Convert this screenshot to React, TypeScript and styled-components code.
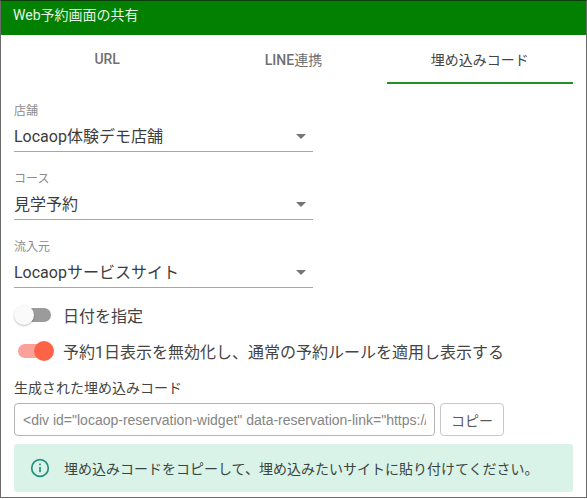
import React, { useState } from "react";
import styled, { createGlobalStyle } from "styled-components";

const GlobalStyle = createGlobalStyle`
  *, *::before, *::after { box-sizing: border-box; }
  body {
    margin: 0;
    background: #fff;
    color: #444;
    font-family: Roboto, "Noto Sans CJK JP", sans-serif;
    font-size: 14px;
  }
  button, input, select { font: inherit; color: inherit; }
`;

const Dialog = styled.main`
  border: 1px solid #6b6b6b;
  border-top-color: #0b3d0b;
  background: #fff;
`;

const Header = styled.header`
  padding: 4px 12px 10px;
  background: #028002;
  color: #e4f3e4;
`;

const Title = styled.h1`
  margin: 0;
  font-size: 14px;
  font-weight: 400;
  line-height: 20px;
`;

const Body = styled.div`
  padding: 0 13px 5px;
`;

const Tabs = styled.div`
  display: grid;
  grid-template-columns: repeat(3, 1fr);
  margin-bottom: 18px;
`;

const Tab = styled.button<{ $active: boolean }>`
  height: 49px;
  padding: 1px 0 0;
  border: 0;
  border-bottom: 2px solid ${(p) => (p.$active ? "#259025" : "transparent")};
  background: none;
  color: ${(p) => (p.$active ? "#444" : "#707070")};
  font-weight: 400;
  cursor: pointer;
`;

const Latin = styled.span`
  font-weight: 500;
`;

const Fields = styled.div`
  display: flex;
  flex-direction: column;
  gap: 18px;
  max-width: 299px;
`;

const FieldBox = styled.label`
  display: grid;
  border-bottom: 1px solid #a8a8a8;
`;

const FieldLabel = styled.span`
  color: #8c8c8c;
  font-size: 12px;
  line-height: 19px;
`;

const SelectWrap = styled.span`
  display: grid;
  align-items: center;
  & > * { grid-area: 1 / 1; }
  svg {
    justify-self: end;
    margin-right: 7px;
    pointer-events: none;
  }
`;

const Select = styled.select`
  width: 100%;
  height: 30px;
  padding: 0 24px 0 0;
  border: 0;
  appearance: none;
  background: transparent;
  color: #3c3c3c;
  font-size: 16px;
`;

const Switches = styled.div`
  display: flex;
  flex-direction: column;
  margin-top: 9px;
`;

const SwitchLabel = styled.label`
  display: flex;
  align-items: center;
  gap: 9px;
  height: 36px;
  font-size: 16px;
`;

const SwitchInput = styled.input`
  flex: none;
  appearance: none;
  width: 40px;
  height: 20px;
  margin: 0;
  position: relative;
  cursor: pointer;
  &::before {
    content: "";
    position: absolute;
    inset: 3px 3px 3px 4px;
    border-radius: 7px;
    background: #9b9b9b;
  }
  &::after {
    content: "";
    position: absolute;
    left: 0;
    top: 0;
    width: 20px;
    height: 20px;
    border-radius: 50%;
    background: #fafafa;
    box-shadow: 0 1px 2px rgba(0, 0, 0, 0.25);
  }
  &:checked::before { background: #fca19a; }
  &:checked::after {
    left: 20px;
    background: #ff6347;
    box-shadow: none;
  }
`;

const CodeLabel = styled.label`
  display: block;
  margin-top: 8px;
  line-height: 22px;
`;

const CodeRow = styled.div`
  display: flex;
  gap: 5px;
  margin: 4px 0 8px;
`;

const CodeInput = styled.input`
  flex: 0 1 421px;
  min-width: 0;
  height: 33px;
  padding: 0 8px;
  border: 1px solid #b4b4b4;
  border-radius: 4px;
  background: #fff;
  color: #858585;
  font-family: "Liberation Sans", Arial, sans-serif;
`;

const CopyButton = styled.button`
  flex: none;
  width: 64px;
  height: 33px;
  padding: 0;
  border: 1px solid #c8c8c8;
  border-radius: 4px;
  background: #fff;
  color: #5a5a5a;
  cursor: pointer;
`;

const Notice = styled.div`
  display: flex;
  align-items: center;
  gap: 14px;
  min-height: 48px;
  padding: 6px 16px;
  border-radius: 3px;
  background: #daf3e8;
  color: #3a4540;
  svg { flex: none; }
`;

type FieldProps = { label: string; value: string };

function Field({ label, value }: FieldProps) {
  return (
    <FieldBox>
      <FieldLabel>{label}</FieldLabel>
      <SelectWrap>
        <Select defaultValue={value}>
          <option>{value}</option>
        </Select>
        <svg width="10" height="5" viewBox="0 0 10 5" aria-hidden="true">
          <path d="M0 0H10L5 5Z" fill="#757575" />
        </svg>
      </SelectWrap>
    </FieldBox>
  );
}

function Switch({ label, on = false }: { label: string; on?: boolean }) {
  return (
    <SwitchLabel>
      <SwitchInput type="checkbox" role="switch" defaultChecked={on} />
      {label}
    </SwitchLabel>
  );
}

function InfoIcon() {
  return (
    <svg width="20" height="20" viewBox="0 0 20 20" fill="none" aria-hidden="true">
      <circle cx="10" cy="10" r="8.3" stroke="#23917c" strokeWidth="1.7" />
      <path d="M10 9V14.2M10 5.6V7.3" stroke="#23917c" strokeWidth="1.7" />
    </svg>
  );
}

const tabs = [
  { latin: "URL", text: "" },
  { latin: "LINE", text: "連携" },
  { latin: "", text: "埋め込みコード" },
];
const code = '<div id="locaop-reservation-widget" data-reservation-link="https://';

export default function App() {
  const [active, setActive] = useState(2);
  return (
    <>
      <GlobalStyle />
      <Dialog>
        <Header>
          <Title>Web予約画面の共有</Title>
        </Header>
        <Body>
          <Tabs role="tablist">
            {tabs.map(({ latin, text }, i) => (
              <Tab
                key={latin + text}
                type="button"
                role="tab"
                aria-selected={i === active}
                $active={i === active}
                onClick={() => setActive(i)}
              >
                {latin && <Latin>{latin}</Latin>}
                {text}
              </Tab>
            ))}
          </Tabs>
          <Fields>
            <Field label="店舗" value="Locaop体験デモ店舗" />
            <Field label="コース" value="見学予約" />
            <Field label="流入元" value="Locaopサービスサイト" />
          </Fields>
          <Switches>
            <Switch label="日付を指定" />
            <Switch label="予約1日表示を無効化し、通常の予約ルールを適用し表示する" on />
          </Switches>
          <CodeLabel htmlFor="embed-code">生成された埋め込みコード</CodeLabel>
          <CodeRow>
            <CodeInput id="embed-code" readOnly value={code} />
            <CopyButton type="button" onClick={() => navigator.clipboard?.writeText(code)}>
              コピー
            </CopyButton>
          </CodeRow>
          <Notice role="status">
            <InfoIcon />
            <span>埋め込みコードをコピーして、埋め込みたいサイトに貼り付けてください。</span>
          </Notice>
        </Body>
      </Dialog>
    </>
  );
}
